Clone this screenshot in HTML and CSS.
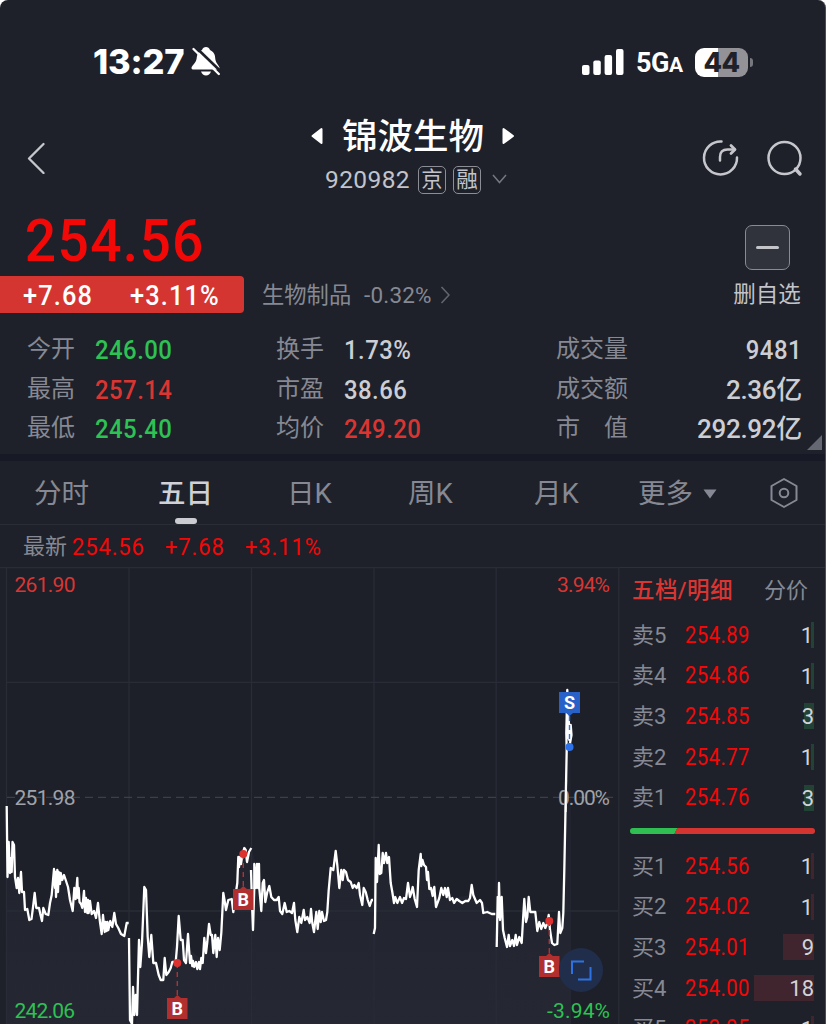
FILE: index.html
```html
<!DOCTYPE html>
<html lang="zh-CN">
<head>
<meta charset="utf-8">
<title>锦波生物 920982</title>
<link rel="stylesheet" href="styles.css">
</head>
<body>
<main class="screen">
  <header class="status">
    <span class="clock">13:27</span>
    <svg class="bell" width="30" height="32" viewBox="0 0 30 32">
      <path d="M3 23.500C1.500 23.500 1 22 2 20.500C4.500 17 6.500 16 6.800 11C7.200 7 9.500 5 12 4C13 0 19 0 20 4C23.500 6 25 8 25.200 12C25.500 17 28 18 29.500 21.500Q29.500 23.500 28 23.500Z M11 25.500H21Q19.500 29.500 16 29.500T11 25.500Z" fill="#fff"/>
      <path d="M5.500 1L32 26.500" stroke="#1e212a" stroke-width="2.600"/>
      <path d="M3.500 3L28.800 28" stroke="#fff" stroke-width="2.300" stroke-linecap="round"/>
    </svg>
    <svg class="signal" width="42" height="28" viewBox="0 0 42 28" fill="#fff">
      <rect x="0" y="17" width="7.500" height="10" rx="2"/><rect x="11.300" y="12.500" width="7.500" height="14.500" rx="2"/><rect x="22.600" y="7" width="7.500" height="20" rx="2"/><rect x="34" y="1" width="7.500" height="26" rx="2"/>
    </svg>
    <span class="network">5G<small>A</small></span>
    <span class="battery">44</span><i class="battery-tip"></i>
  </header>

  <nav class="nav">
    <svg class="back" width="20" height="32" viewBox="0 0 20 32"><path d="M16.500 2L2 16.500L16.500 31" fill="none" stroke="#c6c7cc" stroke-width="2.300" stroke-linecap="round" stroke-linejoin="round"/></svg>
    <div class="heading">
      <div class="name-line">
        <svg width="13" height="18" viewBox="0 0 13 18"><path d="M11.500 2V16L2.500 9Z" fill="#fff" stroke="#fff" stroke-width="2" stroke-linejoin="round"/></svg>
        <h1>锦波生物</h1>
        <svg width="13" height="18" viewBox="0 0 13 18"><path d="M2.500 2V16L12 9Z" fill="#fff" stroke="#fff" stroke-width="2" stroke-linejoin="round"/></svg>
      </div>
      <div class="code-line">
        <span class="code">920982</span><span class="tag">京</span><span class="tag">融</span>
        <svg width="16" height="10" viewBox="0 0 16 10"><path d="M1 1L7.500 8.500L14 1" fill="none" stroke="#747780" stroke-width="1.500"/></svg>
      </div>
    </div>
    <svg class="share" width="38" height="38" viewBox="0 0 38 38" fill="none" stroke="#c6c7cc" stroke-width="2.500" stroke-linecap="round" stroke-linejoin="round"><path d="M19.500 2.500A16.500 16.500 0 1 0 35 18.500"/><path d="M18 21.500V18Q18 10.500 25.500 10.500H32.500"/><path d="M29 6.500L33 10.500L29 14.500" stroke-width="2.800"/></svg>
    <svg class="search" width="38" height="38" viewBox="0 0 38 38" fill="none" stroke="#c6c7cc" stroke-width="2.500" stroke-linecap="round"><circle cx="18.500" cy="18" r="16"/><path d="M29.500 29L34 34" stroke-width="3.500"/></svg>
  </nav>

  <section class="quote">
    <div class="quote-main">
      <div class="price">254.56</div>
      <div class="change-line">
        <div class="change"><span>+7.68</span><span>+3.11%</span></div>
        <span class="sector">生物制品</span><span class="sector-rate">-0.32%</span>
        <svg width="10" height="18" viewBox="0 0 10 18"><path d="M1.500 1L9 9L1.500 17" fill="none" stroke="#62656f" stroke-width="1.600"/></svg>
      </div>
    </div>
    <div class="watch"><span class="watch-button"></span><span>删自选</span></div>
  </section>

  <section class="stats">
    <span>今开</span><b class="down">246.00</b><span>换手</span><b>1.73%</b><span>成交量</span><b class="end">9481</b>
    <span>最高</span><b class="up">257.14</b><span>市盈</span><b>38.66</b><span>成交额</span><b class="end cjk">2.36亿</b>
    <span>最低</span><b class="down">245.40</b><span>均价</span><b class="up">249.20</b><span>市　值</span><b class="end cjk">292.92亿</b>
    <svg class="corner" width="15" height="15" viewBox="0 0 15 15"><path d="M15 0V15H0Z" fill="#656872"/></svg>
  </section>

  <div class="tabs">
    <span>分时</span><span class="active">五日</span><span>日K</span><span>周K</span><span>月K</span>
    <span class="more">更多 <svg width="14" height="10" viewBox="0 0 14 10"><path d="M.500 .500H13.500L7 9.500Z" fill="#868993"/></svg></span>
    <svg class="gear" width="30" height="32" viewBox="0 0 30 32" fill="none" stroke="#868993" stroke-width="2"><path d="M15 2L27.500 9V23L15 30L2.500 23V9Z" stroke-linejoin="round"/><circle cx="15" cy="16" r="4.300"/></svg>
  </div>

  <div class="latest"><span class="latest-label">最新</span><b class="latest-price">254.56</b><b class="latest-diff">+7.68</b><b>+3.11%</b></div>

  <div class="market">
    <svg class="chart" width="620" height="457" viewBox="0 567 620 457">
      <defs><linearGradient id="shade" x1="0" y1="690" x2="0" y2="1024" gradientUnits="userSpaceOnUse"><stop offset="0" stop-color="#1e212a"/><stop offset="1" stop-color="#252833"/></linearGradient></defs>
      <rect x="7" y="568" width="612" height="456" fill="#1d2028"/>
      <path fill="url(#shade)" d="M7 1024V860L24 892L30 918L45 910L55 880L65 878L75 900L102 925L129 936V1024H136L140 950L145 890L155 963L164 978L180 920L190 950L202 960L220 940L224 905L238 900L240 860L252 850L263 890L280 905L296 925L325 920L332 868L345 875L373 900L378 855L389 865L396 900L415 900L422 860L438 900L472 895L497 916L502 900L508 940L522 940L526 905L536 911L540 925L550 925L557 944L563 913L567 750V705H571V1024Z"/>
      <g stroke="#292c36" stroke-width="1.300" fill="none"><path d="M0 567.700H620M7 682.300H618M7 911H618M6.500 568V1024M129 568V1024M251.500 568V1024M374 568V1024M496.200 568V1024M618.800 568V1024"/><path stroke="#3c3f49" stroke-dasharray="8 5" d="M7 797.300H618"/></g>
      <g class="axis">
        <text class="up" x="14.500" y="592" textLength="61">261.90</text>
        <text class="up" x="557" y="592" textLength="53">3.94%</text>
        <text x="14.500" y="805" textLength="61">251.98</text>
        <text class="down" x="14.500" y="1017.500" textLength="60.500">242.06</text>
        <text class="down" x="547" y="1017.500" textLength="63">-3.94%</text>
      </g>
      <g class="trace">
        <path d="M6.700 806L7.500 877L8.700 842L10 873L11.300 858L11.700 872L12.500 842L14 845L15 877L16.700 888L18 878L19.300 893L21 872L22 892L24 892L25 910L27.300 909L29.300 920L31.500 919L33.300 905L34.700 893L36.300 908L39 908L40.300 914L42 921L43.300 908L45.700 914L48.300 915L50 903L51.700 895L54 869L55 888L55.500 872L56 897L57.300 870L58 892L58.700 872L60 884L60.700 873L62.300 880L64 875L65.700 880L68 887L70 900L72.700 911L74.300 888L75.700 899L77.300 878L78 898L78.700 888L79.500 902L81 904L82.300 908L84 891L85 912L86 898L87.300 913L88 900L88.700 913L90 901L91.700 914L94 911L96 918L98 903L99.700 920L101.700 934L103 915L104.700 932L105.500 922L106.700 931L107.500 922L108.300 930L110.300 921L112.300 927L114.300 913L116 924L118.300 928L121 934L124.300 936L126.700 923H128.700"/>
        <path d="M129 938L130 1020L132 1024L133 987L134.300 1015L135.700 995L137 1015L139 940L140.300 967L142 943L144.300 887L146 890L147.700 937L149.300 957L151.300 935L153.300 963H156L158.700 975L160.700 980H163.300L164.700 958L166.300 975L168.700 972L170.700 968L172.300 962H175.700L177 947L178.700 916L180.700 940H182.700L184 960L186 963L188 934L190 963L191 956L192.300 966L193 961L194.300 967L196 962L197.300 969L199 962L200 969L201.300 958L202.700 963L204.300 938L206 953L207.300 942L209 924L210.700 935H212L213.300 953L215.300 935L216.700 957L218 938L219.700 950L221.300 933L223.300 893L224.500 900L226 910L228.300 900L231.700 899L233.300 912L236 892L237.300 883L238.300 857L239 867L240.300 857L241 864L242.300 855L244.300 848L245.700 850L247 862L249 852L251.300 848"/>
        <path d="M251 870L252 903L253 930L254.300 887V864L256 888L257 864L258 888L259 864L259.300 888L261.300 911L262.700 883L264 880L265.300 902L267.300 892L269.300 886L271.300 897L274 900H276.700L278.700 897L280 911L282.300 914L284.700 903L286.700 912L289.300 911L292 913L294 903L295.300 920L297.300 932L299.300 917L301.300 923L303.700 910L305 920L307.300 917L309.700 923L311 909L312.300 923L314 932L316.300 912L317.700 929L319.300 911L320.700 922L322 912L324 921L326 920L327.300 912L328.700 890L330.700 868L333.300 870L335.700 851L337.300 865L339.300 888L341.300 870L342.700 880L344 870L346 872L348 880L350.700 882L352.700 888L354.300 885L356.700 888L358.700 883L360 895L362.300 905L363.700 888L365.700 892L367.700 900L369.700 906L371.700 900H373"/>
        <path d="M373.700 934L375 928L375.700 858L377 882L378.700 845L379.700 874L381.300 873L382.700 853L384 863L386 853L387.300 863L389 857L390.700 883L392.300 892L394 903L395.300 897L397.300 903L400 897L402 903L404 898L406 899L408 883L410 897L411.300 893L412.700 887L414.700 899L417 907L418.700 870L420.700 854L421.300 866L422.500 860L424 865L426 867L427 880L428 872L429.300 889L431 888L432.700 896L434.300 887L436 907L439.300 898L441.300 888L443.300 895L445 888L446.700 897L448 888L450 900L452.300 898L454 903L456.700 899L459.300 901L462.300 903L465.300 901L468.300 901L470 898L471.700 885L473.300 895L476.700 903L480 900L482 903L483.300 913L487.300 912L491.700 914H495.300"/>
        <path d="M496.700 947L497.700 897L498.500 917L499 883L500 920L501.700 897L503 930L504.700 938L507 947L508.700 935L510 946L512.300 940L514 946L515.700 935L517 945L519.300 937L521.700 943L523 920L524.300 899L526 922L527.300 917L528.700 897L530.300 912H535.300L537.300 931L539.300 922L541.300 929L543.300 923L545.300 928L547.300 923L548.700 915L550 930L552 943L554.300 945L557.300 944L559 912L560.300 933L562.300 928L563.300 913L564.300 870L565.300 820L566.700 750L566.300 733L567.300 690L567.700 738L568.700 717L569.300 740L570.700 725L571.500 735L569.700 745"/>
      </g>
      <g class="axis"><text x="558" y="805" textLength="52">0.00%</text></g>
      <path d="M565.700 812L566.200 780" stroke="#fff" stroke-width="1.800"/>
      <g stroke="#b5302f" stroke-width="1.400" stroke-dasharray="5 4"><path d="M177.300 963V995M243.300 854V887M549.300 921V953"/></g>
      <path d="M569.500 716V747" stroke="#2e72ea" stroke-width="1.400" stroke-dasharray="5 4"/>
      <circle cx="177.300" cy="963" r="4" fill="#db312f"/><circle cx="243.300" cy="854" r="4" fill="#db312f"/><circle cx="549.300" cy="921" r="4" fill="#db312f"/><circle cx="569.500" cy="747" r="4" fill="#2e72ea"/>
      <g fill="#b12f2f"><path d="M167 998H174L177.300 995L181 998H187.500V1019H167Z"/><path d="M233 889H240L243.300 886L247 889H253.500V910H233Z"/><path d="M539 956H546L549.300 953L553 956H559.500V977H539Z"/></g>
      <path d="M559 692H580V713H573L569.500 716L566 713H559Z" fill="#2862c8"/>
      <g class="mark"><text x="177.300" y="1014.500">B</text><text x="243.300" y="905.500">B</text><text x="549.300" y="972.500">B</text><text x="569.500" y="708.500">S</text></g>
      <circle cx="581" cy="970" r="22" fill="#212e4b"/>
      <path d="M572 974V961.500H584M578 979.500H590.500V967" fill="none" stroke="#2d72e5" stroke-width="2"/>
    </svg>

    <aside class="book">
      <div class="book-tabs"><span class="book-active">五档/明细</span><span>分价</span></div>
      <div class="row sell"><span>卖5</span><b>254.89</b><i class="v1">1</i></div>
      <div class="row sell"><span>卖4</span><b>254.86</b><i class="v1">1</i></div>
      <div class="row sell"><span>卖3</span><b>254.85</b><i class="v3">3</i></div>
      <div class="row sell"><span>卖2</span><b>254.77</b><i class="v1">1</i></div>
      <div class="row sell"><span>卖1</span><b>254.76</b><i class="v3">3</i></div>
      <div class="ratio"></div>
      <div class="row buy"><span>买1</span><b>254.56</b><i class="v1">1</i></div>
      <div class="row buy"><span>买2</span><b>254.02</b><i class="v1">1</i></div>
      <div class="row buy"><span>买3</span><b>254.01</b><i class="v9">9</i></div>
      <div class="row buy"><span>买4</span><b>254.00</b><i class="v18">18</i></div>
      <div class="row buy"><span>买5</span><b>253.95</b><i class="v1">1</i></div>
    </aside>
  </div>
</main>
</body>
</html>
```
FILE: styles.css
```css
* { box-sizing: border-box; }
body { margin: 0; background: #fff; }
.screen {
  width: 826px; height: 1024px; overflow: hidden;
  background: #1e212a; border-radius: 8px 8px 0 0;
  border-right: 1px solid #4b4d52;
  font-family: Roboto, "Noto Sans CJK SC", sans-serif;
  color: #868993; white-space: nowrap;
}
svg { display: block; flex: none; }
b, i { font-style: normal; font-weight: 400; }

.status { display: flex; align-items: center; height: 114px; padding: 10px 0 0 93px; color: #fff; }
.clock { width: 97px; font: 800 34.500px/40px Inter, sans-serif; letter-spacing: -.2px; }
.signal { margin-left: 362px; }
.network { width: 59px; margin: 4px 0 0 12px; font: 700 27px/40px Roboto, sans-serif; letter-spacing: -.5px; }
.network small { font-size: 21px; }
.battery { width: 53px; height: 29px; border-radius: 9px; background: linear-gradient(90deg, #fff 44%, #929297 44%); color: #1e212a; font: 800 27px/29px Inter, sans-serif; letter-spacing: -.5px; text-align: center; }
.battery-tip { width: 3px; height: 9px; margin-left: 2px; border-radius: 0 4px 4px 0; background: #77787e; }

.nav { display: flex; height: 90px; padding-left: 27px; }
.back { margin-top: 28px; }
.heading { width: 200px; margin-left: 263px; }
.name-line { display: flex; align-items: center; height: 43px; }
h1 { width: 142px; margin: -5px 17px 0 19px; color: #fff; font: 500 35.5px/43px "Noto Sans CJK SC", sans-serif; }
.code-line { display: flex; align-items: center; height: 43px; padding: 2px 0 0 15px; color: #c3c4ca; }
.code { width: 93px; font-size: 24.500px; letter-spacing: .4px; }
.tag { width: 28px; height: 28px; margin-right: 7px; border: 1.500px solid #8c8e96; border-radius: 5px; font-size: 21.500px; line-height: 25px; text-align: center; }
.code-line svg { margin: -2px 0 0 4px; }
.share { margin: 25px 0 0 192px; }
.search { margin: 26px 0 0 26px; }

.quote { display: flex; justify-content: space-between; height: 126px; }
.price { height: 72px; padding-left: 27px; color: #f30808; font-size: 60px; line-height: 74px; letter-spacing: 1.400px; font-weight: 500; transform: scaleX(.92); transform-origin: left; }
.change-line { display: flex; align-items: center; height: 37px; }
.change { display: flex; width: 244px; height: 37px; padding-left: 23px; border-radius: 0 4px 4px 0; background: #d53531; color: #fff; font-size: 27px; font-weight: 500; line-height: 41px; }
.change span { transform: scaleX(.94); transform-origin: left; letter-spacing: 1.200px; }
.change span:first-child { width: 107px; }
.sector { width: 102px; margin-left: 18px; font-size: 22.300px; line-height: 32px; }
.sector-rate { width: 76px; font-size: 22.500px; letter-spacing: .2px; }
.watch { display: flex; flex-direction: column; align-items: center; width: 100px; margin-right: 8px; padding-top: 21px; color: #c3c4ca; font: 22.500px/44px "Noto Sans CJK SC", sans-serif; }
.watch-button { display: grid; place-items: center; width: 45px; height: 45px; border: 1px solid #898b93; border-radius: 7px; background: #30333c; }
.watch-button::after { content: ""; width: 23px; height: 3px; border-radius: 2px; background: #c3c4ca; }

.stats { position: relative; display: grid; grid-template-columns: 68px 181px 68px 212px 100px 1fr; grid-auto-rows: 39.500px; height: 131px; padding: 0 23px 0 27px; border-bottom: 7px solid #171926; font-size: 24px; line-height: 38px; }
.stats b { color: #cdced3; font-size: 26px; line-height: 41px; font-weight: 500; letter-spacing: .5px; transform: scaleX(.92); transform-origin: left; }
.stats .end { text-align: right; transform-origin: right; }
.stats .cjk { transform: none; letter-spacing: -.3px; }
.stats .up { color: #db3532; }
.stats .down { color: #2dc253; }
.corner { position: absolute; right: 3px; bottom: 4px; }

.tabs { display: flex; align-items: center; height: 64px; border-bottom: 1px solid #2a2d36; padding: 2px 0 0 34px; font-size: 27.500px; line-height: 62px; }
.tabs > span { width: 124px; }
.tabs .active { position: relative; color: #d0d1d6; font-weight: 500; }
.active::after { content: ""; position: absolute; left: 16.500px; bottom: 1px; width: 22px; height: 6px; border-radius: 3px; background: #cbccd1; }
.tabs > span:nth-child(2) { width: 129px; }
.tabs > span:nth-child(3) { width: 121px; }
.tabs > span:nth-child(4) { width: 126px; }
.tabs > span:nth-child(5) { width: 104px; }
.tabs .more { display: flex; align-items: center; gap: 10px; width: 131px; }
.gear { margin-top: -2px; }

.latest { display: flex; height: 42px; padding-left: 23px; color: #f30808; font-size: 24px; line-height: 45px; }
.latest b { transform: scaleX(.92); transform-origin: left; letter-spacing: .9px; }
.latest-price { width: 93px; }
.latest-diff { width: 80px; }
.latest-label { width: 49px; color: #868993; font-size: 22px; line-height: 44px; }

.market { display: flex; height: 457px; }
.axis { font-size: 21px; fill: #a0a2aa; }
.axis .up { fill: #db3532; }
.axis .down { fill: #2dc253; }
.trace { fill: none; stroke: #fff; stroke-width: 2.300; stroke-linejoin: round; }
.mark { fill: #fff; font: 700 18px Roboto, sans-serif; text-anchor: middle; }

.book { width: 205px; padding: 0 11px 0 12px; border-top: 1px solid #2b303a; }
.book-tabs { display: flex; justify-content: space-between; height: 47px; padding-right: 6px; font-size: 22px; line-height: 45px; }
.book-active { color: #db3532; font-size: 22.500px; font-weight: 500; letter-spacing: .4px; }
.row { display: flex; align-items: center; height: 40.600px; font-size: 22px; }
.row span { width: 53px; margin-top: -5px; }
.row b { width: 70px; color: #f30808; font-size: 23px; letter-spacing: .5px; transform: scaleX(.88); transform-origin: left; }
.row i { display: flex; justify-content: flex-end; height: 26px; margin-left: auto; color: #d3d4d8; font-size: 22px; line-height: 27px; }
.v1 { width: 3px; }
.v3 { width: 10px; }
.v9 { width: 31px; }
.row .v18 { width: 60px; margin-left: -1px; }
.row .v1 { padding-right: 1px; }
.sell i { background: #234236; }
.buy i { background: #40252e; }
.ratio { height: 6px; margin: 10px 0 12px -2px; width: 185px; border-radius: 3px; background: linear-gradient(120deg, #30bd52 25%, #d53531 25%); }
```
